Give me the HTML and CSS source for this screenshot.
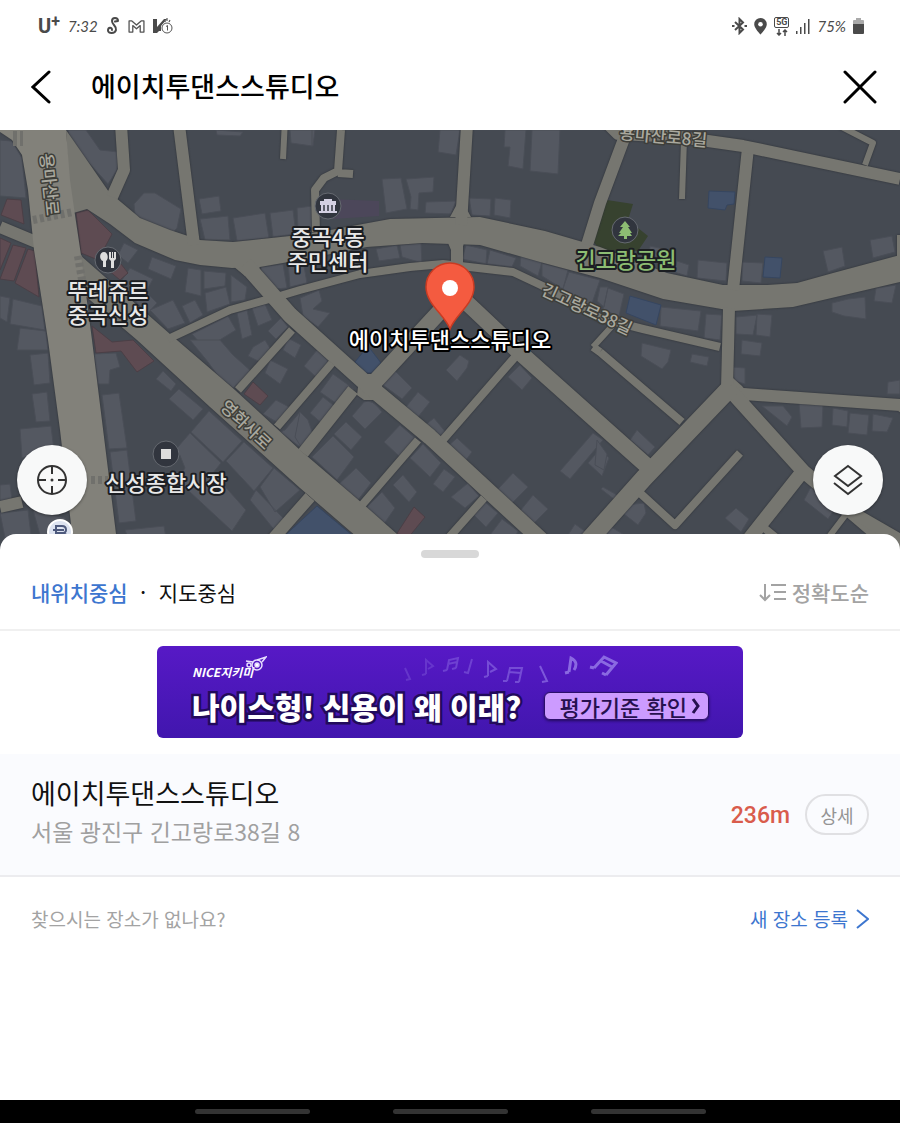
FILE: index.html
```html
<!DOCTYPE html>
<html lang="ko">
<head>
    <meta charset="UTF-8">
    <meta name="viewport" content="width=device-width, initial-scale=1.0">
    <title>에이치투댄스스튜디오</title>
    <link rel="stylesheet" href="styles.css">
</head>
<body>
    <div class="status-bar">
        <div class="status-group">
            <span class="carrier">U<sup>+</sup></span>
            <span class="clock">7:32</span>
            <svg class="status-icon" width="14" height="18" viewBox="0 0 14 18" fill="none" stroke="#4a4a4a" stroke-width="2" stroke-linecap="round">
                <path d="M12 4C12 0 6 0 6 4C6 8 11 9 10 13C9 17 2 17 2 13.500C2 10 6 10 6 13M9 4.500L12 4"/>
            </svg>
            <svg class="status-icon" width="17" height="13" viewBox="0 0 18 14" fill="none" stroke="#555" stroke-width="1.400" stroke-linejoin="round">
                <path d="M1 13V1H4L9 5.500L14 1H17V13H13V6L9 9.500L5 6V13Z"/>
            </svg>
            <svg class="status-icon" width="20" height="16" viewBox="0 0 20 16">
                <path d="M0 1H4V9L11 1H14L8 8V13H6L4 15H0Z" fill="#4a4a4a"/>
                <path d="M11 2l1.500 2M14 0v3M17 2l-1 2" stroke="#555" stroke-width="1.200"/>
                <circle cx="14" cy="10" r="5" fill="#fff" stroke="#555"/>
                <path d="M13 8.500l1.500-1v5" fill="none" stroke="#555"/>
            </svg>
        </div>
        <div class="status-group">
            <svg class="status-icon" width="15" height="18" viewBox="0 0 15 18" fill="none" stroke="#4a4a4a" stroke-width="2">
                <path d="M3 5L11 12.500L7.500 16V2L11 5.500L3 13"/>
                <path d="M0 9h2.500M12.500 9H15"/>
            </svg>
            <svg class="status-icon" width="13" height="17" viewBox="0 0 13 17">
                <path d="M6.500 0A6.300 6.300 0 0 0 0.200 6.300C0.200 10.500 6.500 16.500 6.500 16.500S12.800 10.500 12.800 6.300A6.300 6.300 0 0 0 6.500 0Z" fill="#4a4a4a"/>
                <circle cx="6.500" cy="6.300" r="2.300" fill="#fff"/>
            </svg>
            <span class="network">
                <span class="network-name">5G</span>
                <svg width="12" height="7" viewBox="0 0 12 7" fill="none" stroke="#4a4a4a" stroke-width="1.500">
                    <path d="M3 0V6M1 4L3 6L5 4M9 7V1M7 3L9 1L11 3"/>
                </svg>
            </span>
            <svg class="status-icon" width="14" height="15" viewBox="0 0 14 15" fill="#4a4a4a">
                <path d="M0 12h1.500v3H0zM4 8h1.500v7H4zM8 4h1.500v11H8zM12 0h1.500v15H12z"/>
            </svg>
            <span class="battery-text">75%</span>
            <svg class="status-icon" width="11" height="16" viewBox="0 0 11 16">
                <path d="M3 0H8V2H10Q11 2 11 3V6H0V3Q0 2 1 2H3Z" fill="#aaa"/>
                <path d="M0 6H11V15Q11 16 10 16H1Q0 16 0 15Z" fill="#4a4a4a"/>
            </svg>
        </div>
    </div>

    <header class="header">
        <button class="icon-button" type="button" aria-label="뒤로">
            <svg width="20" height="34" viewBox="0 0 20 34" fill="none" stroke="#000" stroke-width="3" stroke-linecap="round">
                <path d="M18 2L2 17L18 32"/>
            </svg>
        </button>
        <h1 class="header-title">에이치투댄스스튜디오</h1>
        <button class="icon-button" type="button" aria-label="닫기">
            <svg width="34" height="34" viewBox="0 0 34 34" fill="none" stroke="#000" stroke-width="3" stroke-linecap="round">
                <path d="M2 2L32 32M32 2L2 32"/>
            </svg>
        </button>
    </header>

    <main class="main">
        <section class="map" aria-label="지도">
            <svg class="map-canvas" viewBox="0 130 900 420" preserveAspectRatio="xMidYMin slice">
                <rect x="0" y="130" width="900" height="420" fill="#454a52"/>

                <!-- buildings -->
                <g class="building">
                    <path d="M68 130H86L100 150L119 152L117 170L108 184L70 142ZM0 140L12 141L22 158L26 198L0 196Z"/>
                    <path d="M134 204L144 193L155 193L181 209L177 228L170 236L135 215ZM199 199L219 196L221 211L202 214Z"/>
                    <path d="M200 219L228 216L230 240L205 240ZM233 218L265 213L269 238L237 241ZM270 213L293 210L296 234L273 237ZM297 208L312 206L312 228L298 230Z"/>
                    <path d="M152 257L176 266L171 279L148 269ZM124 243L138 250L128 263L118 255ZM130 268L153 279L146 292L157 303L147 314L120 283Z"/>
                    <path d="M188 268L201 270L201 296L185 292ZM204 271L226 273L225 286L204 289ZM205 293L226 287L230 304L207 312ZM231 275L247 287L245 300L231 302ZM261 267L283 264L287 288L261 290ZM288 262L303 260L307 283L290 287Z"/>
                    <path d="M150 310L173 300L185 323L168 329ZM182 306L195 300L203 315L190 323ZM192 334L228 316L236 330L205 349ZM237 313L247 310L252 335L242 339ZM252 308L265 304L272 320L258 326ZM268 331L281 318L288 327L276 339Z"/>
                    <path d="M0 296L10 298L7 322L0 318ZM13 299L42 306L45 330L10 324ZM20 328L46 331L48 350L17 350ZM30 355L48 353L50 383L34 385ZM32 394L47 392L50 421L36 422ZM20 429L51 426L54 450L22 458ZM0 485L10 484L12 500L0 502ZM0 513L28 510L31 535L5 538ZM33 510L65 518L70 535L40 535Z"/>
                    <path d="M94 354L116 353L120 367L110 370L109 384L98 384ZM102 395L119 393L127 448L109 449ZM110 452L127 450L136 521L119 523ZM125 530L164 526L166 538L128 538ZM163 371L176 384L171 391L156 379ZM179 389L203 409L193 420L169 399Z"/>
                    <path d="M209 411L242 441L223 462L191 432ZM190 433L221 463L213 473L246 510L232 531L177 480L185 468L177 448ZM244 442L273 468L254 491L226 461ZM274 468L300 490L275 512L260 487ZM256 490L285 520L276 532L250 500Z"/>
                    <path d="M190 340H220L233 355L252 372L233 388L218 376L208 362ZM253 347L265 340L273 353L262 363L248 356ZM270 360L288 369L280 384L265 373ZM276 400L289 407L280 424L263 414ZM285 430L300 412L316 437L304 450L280 432ZM288 338L301 345L295 358L283 350Z"/>
                    <path d="M300 298L319 290L322 301L313 309L330 313L318 327L303 316ZM317 350L330 362L316 377L304 366ZM333 374L354 389L340 406L320 392ZM323 397L337 408L325 426L310 413ZM300 412L308 420L315 440L303 450L295 437Z"/>
                    <path d="M364 402Q372 398 382 412L365 429L352 416ZM346 422L362 437L351 450L334 434ZM333 436L354 457L337 480L312 457ZM356 468L371 483L358 500L339 484ZM400 425L415 438L400 457L384 442ZM382 492L395 508L384 524L366 508Z"/>
                    <path d="M384 372L394 370L412 388L402 399L383 385ZM418 392L430 402L418 417L406 407ZM434 418L448 435L443 440L424 426ZM457 438L472 452L466 460L448 446ZM423 444L441 463L430 477L410 458ZM444 469L455 477L443 492L433 484ZM403 475L417 492L409 502L393 485ZM468 483L479 496L465 508L451 497ZM485 502L498 513L486 527L474 515ZM502 519L518 531L510 548L490 535Z"/>
                    <path d="M460 355L469 361L467 368L457 381L446 370ZM520 365L532 378L522 390L508 377ZM513 473L528 487L512 503L498 489ZM533 495L548 509L534 523L520 511ZM575 524L590 535L580 545L568 535ZM593 433L603 440L570 479L560 471ZM600 449L609 458L602 476L588 463Z"/>
                    <path d="M300 130H315L313 146L300 144ZM440 130H460L456 155L438 152ZM505 130H526L523 169L508 166L510 147H504ZM532 130H560L558 174L530 171ZM382 179L401 178L407 209L386 213ZM406 179L434 177L433 192L419 193L418 210L410 209L411 197ZM426 202L456 201L451 214L425 213ZM469 198L491 199L490 216L472 215ZM495 198L511 200L510 218L494 215Z"/>
                    <path d="M376 249L397 245L400 258L379 261ZM400 245L421 243L422 263L402 257ZM466 245L487 250L486 264L462 259ZM490 250L516 258L512 267L487 264ZM521 253L542 262L538 276L520 266ZM542 263L568 270L563 289L542 276ZM569 272L600 280L590 309L562 291Z"/>
                    <path d="M600 287H608L604 307L597 301ZM608 288L624 294L619 316L603 310ZM661 307L701 311L698 331L660 326ZM706 314L722 315L720 340L704 338ZM736 317L757 315L753 335L736 334ZM757 314L772 315L770 337L756 335Z"/>
                    <path d="M650 246L664 249L663 258L649 256ZM677 261L689 265L687 276L674 272ZM698 260L727 263L726 281L697 278ZM742 262L763 263L761 283L742 281ZM823 251L842 247L845 266L828 272ZM870 240L892 236L895 252L873 258ZM832 303L848 299L865 297L866 319L844 316L832 312ZM876 288L896 285L892 303L874 301Z"/>
                    <path d="M642 343L671 350L668 362L662 369L641 356ZM692 354L709 357L707 366L690 362ZM742 340L762 343L760 356L741 354ZM733 367L745 368L745 384L734 381ZM762 406L783 406L792 417L787 426ZM799 403L823 405L822 427L801 428ZM833 408L848 411L847 427L832 425ZM850 413L869 415L867 435L848 433ZM873 414L893 418L887 432L872 431ZM888 382L900 380V394L887 394ZM637 430L655 447L648 455L630 440ZM603 487L617 495L615 500L601 489ZM626 505L644 503L646 513L638 525L624 514ZM736 508L749 519L741 532L725 518ZM812 485L834 510L828 519L804 500ZM606 524L633 540L620 548L600 534ZM597 440L607 454L604 470L595 465Z"/>
                    <path d="M216 130L243 132L240 136L217 135ZM290 130H312V146L291 143Z"/>
                </g>
                <g class="shop">
                    <path d="M7 199L21 200L24 224L1 215ZM0 238L11 243L0 270ZM13 245L26 248L14 281L0 279ZM28 249L35 251L39 297L15 283Z"/>
                    <path d="M76 213L88 210L112 234L98 260L81 253ZM121 264L128 273L120 280L108 270ZM92 326L112 342L133 340L154 361L137 372L121 351L96 353ZM253 382L268 396L260 405L244 394ZM414 507L425 517L408 538H394Z"/>
                </g>
                <path class="school" d="M709 191L735 192L734 204L727 205L725 210L708 208ZM765 257L782 258L780 278L763 277ZM630 296L661 305L656 325L626 313ZM368 346L381 363L374 373H365L355 362ZM317 506L358 540H280Z"/>
                <path class="park" d="M607 200L633 204L628 220L648 236L638 251L600 250L592 240Z"/>
                <path class="office" d="M330 199L379 201V216L333 219Z"/>

                <!-- roads -->
                <g class="roads">
                    <path class="road-area" d="M66 130L109 192L140 218L170 230L200 240L233 242L290 236L330 230L390 219L480 217L545 231L600 247L667 273L723 285H767L797 283L833 273L900 255V282L793 307L733 311L663 299L600 278L540 262L480 245L422 243L367 247L300 260L260 267L232 268L200 265L175 260L135 243L110 224L87 209L70 214Z"/>
                    <path class="road-area" d="M80 255L170 334L235 390L300 450L362 503L415 550H372L300 488L210 407L137 340L84 295Z"/>
                    <path class="road-area" d="M450 217L457 204H464L471 217ZM448 243H464L462 250H451ZM233 266H260L257 276H245ZM358 387L364 374H375L382 384V392L374 400H364L357 395Z"/>
                    <path class="road-area" d="M719 387L733 378L742 386L752 398L745 404L728 399L715 404Z"/>
                    <path class="w6" d="M285 120L283 159M684 140L682 199M840 126L873 143L865 165M593 347L613 325M828 538L847 513M900 235V260"/>
                    <path class="w8" d="M341 130L338 171L324 178L315 190L316 232M338 173L353 174"/>
                    <path class="w8" d="M168 339L230 310L273 298L300 290L360 274L410 267L443 264L513 272L547 288L600 318L643 329L720 347"/>
                    <path class="w8" d="M515 357L441 442M600 352L682 422M593 347L600 352M640 493L675 525L740 453M332 363L277 427M292 330L238 390M418 440L362 505M484 498L445 542M763 527L785 545"/>
                    <path class="w12" d="M121 125L124 170L112 197M179 125L194 245M467 125L461 225M457 243V268M748 148L733 290M729 308L727 388M353 390L303 453M310 497L272 540M0 227L36 242M0 507L22 502"/>
                    <path class="w12" d="M608 124L618 134L680 137L743 146L900 179M625 136L600 203L587 245M730 393L900 405L915 415"/>
                    <path class="w16" d="M245 264L290 315L370 387L430 437L550 548M455 295L370 387M448 285L517 350L647 466"/>
                    <path class="w14" d="M728 388L803 471L742 548M803 471L835 498L890 545"/>
                    <path class="w18" d="M730 388L644 478L580 550"/>
                    <path class="w12" d="M848 510L900 540V550"/>
                    <path class="main-road" d="M0 130H66L70 180L75 215L81 255L92 340L118 550H74L60 430L48 340L34 250L28 190L22 155L12 140L0 132Z"/>
                </g>
                <g class="crosswalk">
                    <path d="M13 135h10M13 142h10"/>
                    <path d="M33 220L73 212M78 256L82 280M91 480H108"/>
                </g>

                <!-- road names -->
                <g class="road-name">
                    <text x="0" y="0" transform="translate(40 154) rotate(84)">용마산로</text>
                    <text x="0" y="0" transform="translate(619 139) rotate(5)">용마산로8길</text>
                    <text x="0" y="0" transform="translate(540 294) rotate(25)">긴고랑로38길</text>
                    <text x="0" y="0" transform="translate(219 408) rotate(43)">영화사로</text>
                </g>

                <!-- places -->
                <g class="marker">
                    <circle cx="108" cy="260" r="13"/>
                    <circle cx="328" cy="206" r="13"/>
                    <circle cx="625" cy="230" r="13"/>
                    <circle cx="166" cy="454" r="13"/>
                </g>
                <path d="M104 252C99 252 99 260 103 261V267H106V261C109 259 108 252 104 252ZM109 252V259L111 261V268H114V261L116 259V252H114V258H113V252H112V258H111V252Z" fill="#dedede"/>
                <path d="M324 201V199H332V201H336V205H320V201ZM321 205H335V211H337V213H319V211H321Z" fill="#d4d0e2"/>
                <path d="M324 205V211M328 205V211M332 205V211" stroke="#353943" stroke-width="1.500"/>
                <path d="M625 221L630 227H628L632 233H630L632 236H627V239H624V236H618L621 233H619L623 227H620Z" fill="#8dbd73"/>
                <rect x="161" y="449" width="10" height="10" fill="#ddd"/>
                <circle cx="60" cy="532" r="12" fill="#dde3f0" stroke="#fff" stroke-width="2"/>
                <path d="M56 541V526H62Q66 526 66 530Q66 533 62 533H56M62 533Q67 534 67 537Q67 541 62 541H56M53 530H64M53 536H65" fill="none" stroke="#4e5a7d" stroke-width="2"/>
                <g class="place-name">
                    <text><tspan x="108" y="299">뚜레쥬르</tspan><tspan x="108" y="323">중곡신성</tspan></text>
                    <text><tspan x="328" y="245">중곡4동</tspan><tspan x="328" y="270">주민센터</tspan></text>
                    <text x="166" y="491">신성종합시장</text>
                    <text class="park-name" x="626" y="268">긴고랑공원</text>
                    <text class="selected-name" x="450" y="348">에이치투댄스스튜디오</text>
                </g>
                <path d="M450 329C445 315 426 304 426 287A24 24 0 0 1 474 287C474 304 455 315 450 329Z" fill="#f45b40" stroke="#c93b22" stroke-width="1.500"/>
                <circle cx="450" cy="288" r="8" fill="#fff"/>
            </svg>

            <div class="map-buttons">
                <button class="map-button" type="button" aria-label="현재 위치">
                    <svg width="32" height="32" viewBox="0 0 32 32" fill="none" stroke="#333" stroke-width="2">
                        <circle cx="16" cy="16" r="14"/>
                        <path d="M16 2V10M16 22V30M2 16H10M22 16H30"/>
                        <circle cx="16" cy="16" r="1.500" fill="#333" stroke="none"/>
                    </svg>
                </button>
                <button class="map-button" type="button" aria-label="지도 레이어">
                    <svg width="32" height="32" viewBox="0 0 32 32" fill="none" stroke="#333" stroke-width="2">
                        <path d="M16 2L29 12L16 22L3 12ZM2 19L16 30L30 19"/>
                    </svg>
                </button>
            </div>
        </section>

        <section class="sheet">
            <div class="handle"></div>

            <div class="filters">
                <div class="filter-group">
                    <button class="filter active" type="button">내위치중심</button>
                    <span class="dot">·</span>
                    <button class="filter" type="button">지도중심</button>
                </div>
                <button class="filter sort" type="button">
                    <svg width="28" height="20" viewBox="0 0 28 20" fill="none" stroke="#a3a3a3" stroke-width="2">
                        <path d="M6 2V18M1 13L6 18L11 13M12 3H27M15 10H27M15 17H27"/>
                    </svg>
                    정확도순
                </button>
            </div>

            <a class="banner" href="#">
                <svg class="notes" width="216" height="32" viewBox="0 0 216 32" fill="none" stroke="#a28cf0" stroke-width="2">
                    <path opacity=".25" d="M3 14L8 25L4 26M24 20V6L31 12L26 15M24 20L20 21"/>
                    <path opacity=".35" d="M45 16L47 6L56 4L54 14M46 10L55 8M45 16L41 17M54 14L50 15M70 5L66 19L62 18"/>
                    <path opacity=".45" d="M86 22V8L94 15L88 18M86 22L82 23M105 27L108 14L120 14L117 28M107 18L119 19M105 27L101 27M117 28L113 28"/>
                    <path opacity=".55" d="M138 12L145 27L140 28"/>
                    <path opacity=".7" stroke-width="3" d="M167 18L169 4Q177 8 172 16M167 18L163 19M192 14L202 3L214 9L204 21M199 7L210 13M192 14L188 13M204 21L200 19"/>
                </svg>
                <span class="banner-brand">
                    NICE지키미
                    <svg class="mascot" width="22" height="16" viewBox="0 0 22 16" fill="none" stroke="#e6dcff" stroke-width="1.500">
                        <circle cx="12" cy="9" r="5"/>
                        <circle cx="12" cy="9" r="2" fill="#fff"/>
                        <circle cx="4" cy="9" r="2"/>
                        <path d="M1 5L8 6M12 4L21 1L17 6"/>
                    </svg>
                </span>
                <span class="banner-row">
                    <strong class="banner-title">나이스형! 신용이 왜 이래?</strong>
                    <span class="banner-cta">평가기준 확인
                        <svg width="10" height="18" viewBox="0 0 10 18" fill="none" stroke="#26104f" stroke-width="3">
                            <path d="M2 2L7 9L2 16"/>
                        </svg>
                    </span>
                </span>
            </a>

            <article class="result">
                <div class="result-info">
                    <h2 class="result-name">에이치투댄스스튜디오</h2>
                    <p class="result-address">서울 광진구 긴고랑로38길 8</p>
                </div>
                <span class="distance">236m</span>
                <button class="detail" type="button">상세</button>
            </article>

            <div class="missing">
                <p class="missing-text">찾으시는 장소가 없나요?</p>
                <a class="register" href="#">새 장소 등록
                    <svg width="13" height="20" viewBox="0 0 13 20" fill="none" stroke="#3d76cf" stroke-width="2">
                        <path d="M1 1L12 10L1 19"/>
                    </svg>
                </a>
            </div>
        </section>
    </main>

    <div class="nav-bar">
        <span class="nav-pill"></span>
        <span class="nav-pill"></span>
        <span class="nav-pill"></span>
    </div>
</body>
</html>
```
FILE: styles.css
```css
* {
    box-sizing: border-box;
}
body {
    display: flex;
    flex-direction: column;
    min-height: 100vh;
    margin: 0;
    background: #fff;
    color: #111;
    font-family: "Noto Sans CJK KR", sans-serif;
}
h1, h2, p {
    margin: 0;
}
button {
    padding: 0;
    border: none;
    background: none;
    color: inherit;
    font-family: inherit;
    cursor: pointer;
}
a {
    text-decoration: none;
}
svg {
    flex: none;
}

/* status bar */
.status-bar {
    display: flex;
    justify-content: space-between;
    align-items: center;
    height: 52px;
    padding: 0 36px 0 38px;
    color: #4a4a4a;
}
.status-group {
    display: flex;
    align-items: center;
    gap: 8px;
}
.carrier {
    font: bold 20px/20px Roboto, sans-serif;
}
.carrier sup {
    font-size: 16px;
    line-height: 0;
    vertical-align: 6px;
}
.clock, .battery-text {
    font: italic 15px/20px Lato, sans-serif;
}
.network {
    display: flex;
    flex-direction: column;
    align-items: center;
    gap: 1px;
}
.network-name {
    padding: 0 1px;
    border: 1px solid #4a4a4a;
    border-radius: 2px;
    font: bold 9px/9px Roboto, sans-serif;
}
.status-group:last-child {
    gap: 7px;
}

/* header */
.header {
    display: flex;
    align-items: center;
    height: 78px;
    padding: 0 23px 10px 31px;
}
.icon-button {
    display: flex;
    padding-top: 2px;
}
.header-title {
    flex: 1;
    margin-left: 40px;
    color: #000;
    font-size: 27px;
    font-weight: 500;
    line-height: 40px;
}

/* map */
.main {
    display: flex;
    flex: 1;
    flex-direction: column;
}
.map {
    position: relative;
    height: 420px;
    background: #454a52;
}
.map-canvas {
    display: block;
    width: 100%;
    height: 100%;
}
.building {
    fill: #545861;
    stroke: #4a4e57;
}
.shop {
    fill: #5e4b52;
    stroke: #4b3f46;
}
.school {
    fill: #42516a;
    stroke: #364660;
}
.park {
    fill: #37422f;
}
.office {
    fill: #4c475a;
}
.roads {
    fill: none;
    stroke: #767670;
    stroke-linejoin: round;
    filter: drop-shadow(0 0 1px #2c2f34);
}
.road-area {
    fill: #767670;
    stroke: none;
}
.main-road {
    fill: #82817a;
    stroke: none;
}
.w6 {
    stroke-width: 6px;
}
.w8 {
    stroke-width: 8px;
}
.w12 {
    stroke-width: 12px;
}
.w14 {
    stroke-width: 14px;
}
.w16 {
    stroke-width: 16px;
}
.w18 {
    stroke-width: 18px;
}
.crosswalk {
    fill: none;
    stroke: #70706c;
    stroke-width: 8px;
    stroke-dasharray: 4 3;
}
.road-name {
    fill: #a9a89e;
    stroke: #3e3e39;
    stroke-width: 3px;
    stroke-linejoin: round;
    paint-order: stroke;
    font-size: 17px;
    font-weight: 500;
}
.marker {
    fill: #31353e;
    stroke: #656970;
    stroke-width: 1px;
}
.place-name {
    fill: #e8e8e8;
    stroke: #1c1e22;
    stroke-width: 4px;
    stroke-linejoin: round;
    paint-order: stroke;
    font-size: 22px;
    font-weight: 500;
    text-anchor: middle;
}
.park-name {
    fill: #8dbd73;
}
.selected-name {
    fill: #fff;
    stroke: #000;
}
.map-buttons {
    position: absolute;
    right: 17px;
    bottom: 35px;
    left: 17px;
    display: flex;
    justify-content: space-between;
}
.map-button {
    display: flex;
    justify-content: center;
    align-items: center;
    width: 70px;
    height: 70px;
    border-radius: 50%;
    background: #f8f9f9;
    box-shadow: 0 1px 3px rgba(0, 0, 0, 0.4);
}

/* bottom sheet */
.sheet {
    position: relative;
    flex: 1;
    margin-top: -16px;
    padding-top: 16px;
    border-radius: 16px 16px 0 0;
    background: #fff;
}
.handle {
    width: 58px;
    height: 8px;
    margin: 0 auto;
    border-radius: 4px;
    background: #d8d8d8;
}
.filters {
    display: flex;
    justify-content: space-between;
    align-items: center;
    height: 73px;
    padding: 0 31px 3px;
    border-bottom: 2px solid #f0f0f0;
}
.filter-group {
    display: flex;
    align-items: center;
    gap: 13px;
}
.filter {
    font-size: 21px;
    line-height: 32px;
}
.filter.active {
    color: #3d76cf;
    font-weight: 500;
}
.dot {
    font-weight: bold;
}
.sort {
    display: flex;
    align-items: center;
    gap: 5px;
    color: #a3a3a3;
    font-weight: 500;
}

/* ad banner */
.banner {
    position: relative;
    display: block;
    width: 586px;
    max-width: calc(100% - 32px);
    height: 92px;
    margin: 15px auto 16px;
    padding: 10px 34px 0 35px;
    overflow: hidden;
    border-radius: 6px;
    background: linear-gradient(#5719c6, #4116ae);
    color: #fff;
}
.notes {
    position: absolute;
    top: 8px;
    right: 125px;
}
.banner-brand {
    display: flex;
    align-items: flex-end;
    height: 24px;
    font-size: 12px;
    font-style: italic;
    font-weight: bold;
    line-height: 16px;
}
.mascot {
    align-self: flex-start;
    margin-left: -8px;
}
.banner-row {
    display: flex;
    justify-content: space-between;
    align-items: center;
    height: 52px;
}
.banner-title {
    -webkit-text-stroke: 5px #220a5c;
    paint-order: stroke fill;
    font-size: 30px;
    font-weight: 900;
    line-height: 40px;
    white-space: nowrap;
}
.banner-cta {
    display: flex;
    align-items: center;
    gap: 4px;
    height: 28px;
    padding: 0 7px 0 14px;
    border: 1px solid #2b0f6b;
    border-radius: 6px;
    background: #cc9bff;
    box-shadow: 0 1px 3px #220a5c;
    color: #26104f;
    font-size: 22px;
    font-weight: 500;
    line-height: 24px;
    white-space: nowrap;
}

/* result */
.result {
    display: flex;
    align-items: center;
    min-height: 123px;
    padding: 0 31px;
    border-bottom: 2px solid #ececef;
    background: #fafbfe;
}
.result-info {
    flex: 1;
    padding-bottom: 5px;
}
.result-name {
    font-size: 27px;
    font-weight: 400;
    line-height: 38px;
}
.result-address {
    color: #a0a0a0;
    font-size: 23px;
    line-height: 38px;
}
.distance {
    padding-top: 3px;
    color: #d95c4c;
    font: 500 23px/32px Roboto, sans-serif;
}
.detail {
    width: 64px;
    height: 41px;
    margin-left: 15px;
    border: 2px solid #e0e0e3;
    border-radius: 21px;
    color: #949494;
    font-size: 18px;
    line-height: 32px;
}
.missing {
    display: flex;
    justify-content: space-between;
    align-items: center;
    height: 84px;
    padding: 0 31px;
    font-size: 19px;
    line-height: 32px;
}
.missing-text {
    color: #a3a3a3;
}
.register {
    display: flex;
    align-items: center;
    gap: 8px;
    color: #3d76cf;
}

/* gesture bar */
.nav-bar {
    display: flex;
    justify-content: center;
    align-items: center;
    gap: 83px;
    height: 23px;
    background: #000;
}
.nav-pill {
    width: 115px;
    height: 5px;
    border-radius: 3px;
    background: #333;
}
```
